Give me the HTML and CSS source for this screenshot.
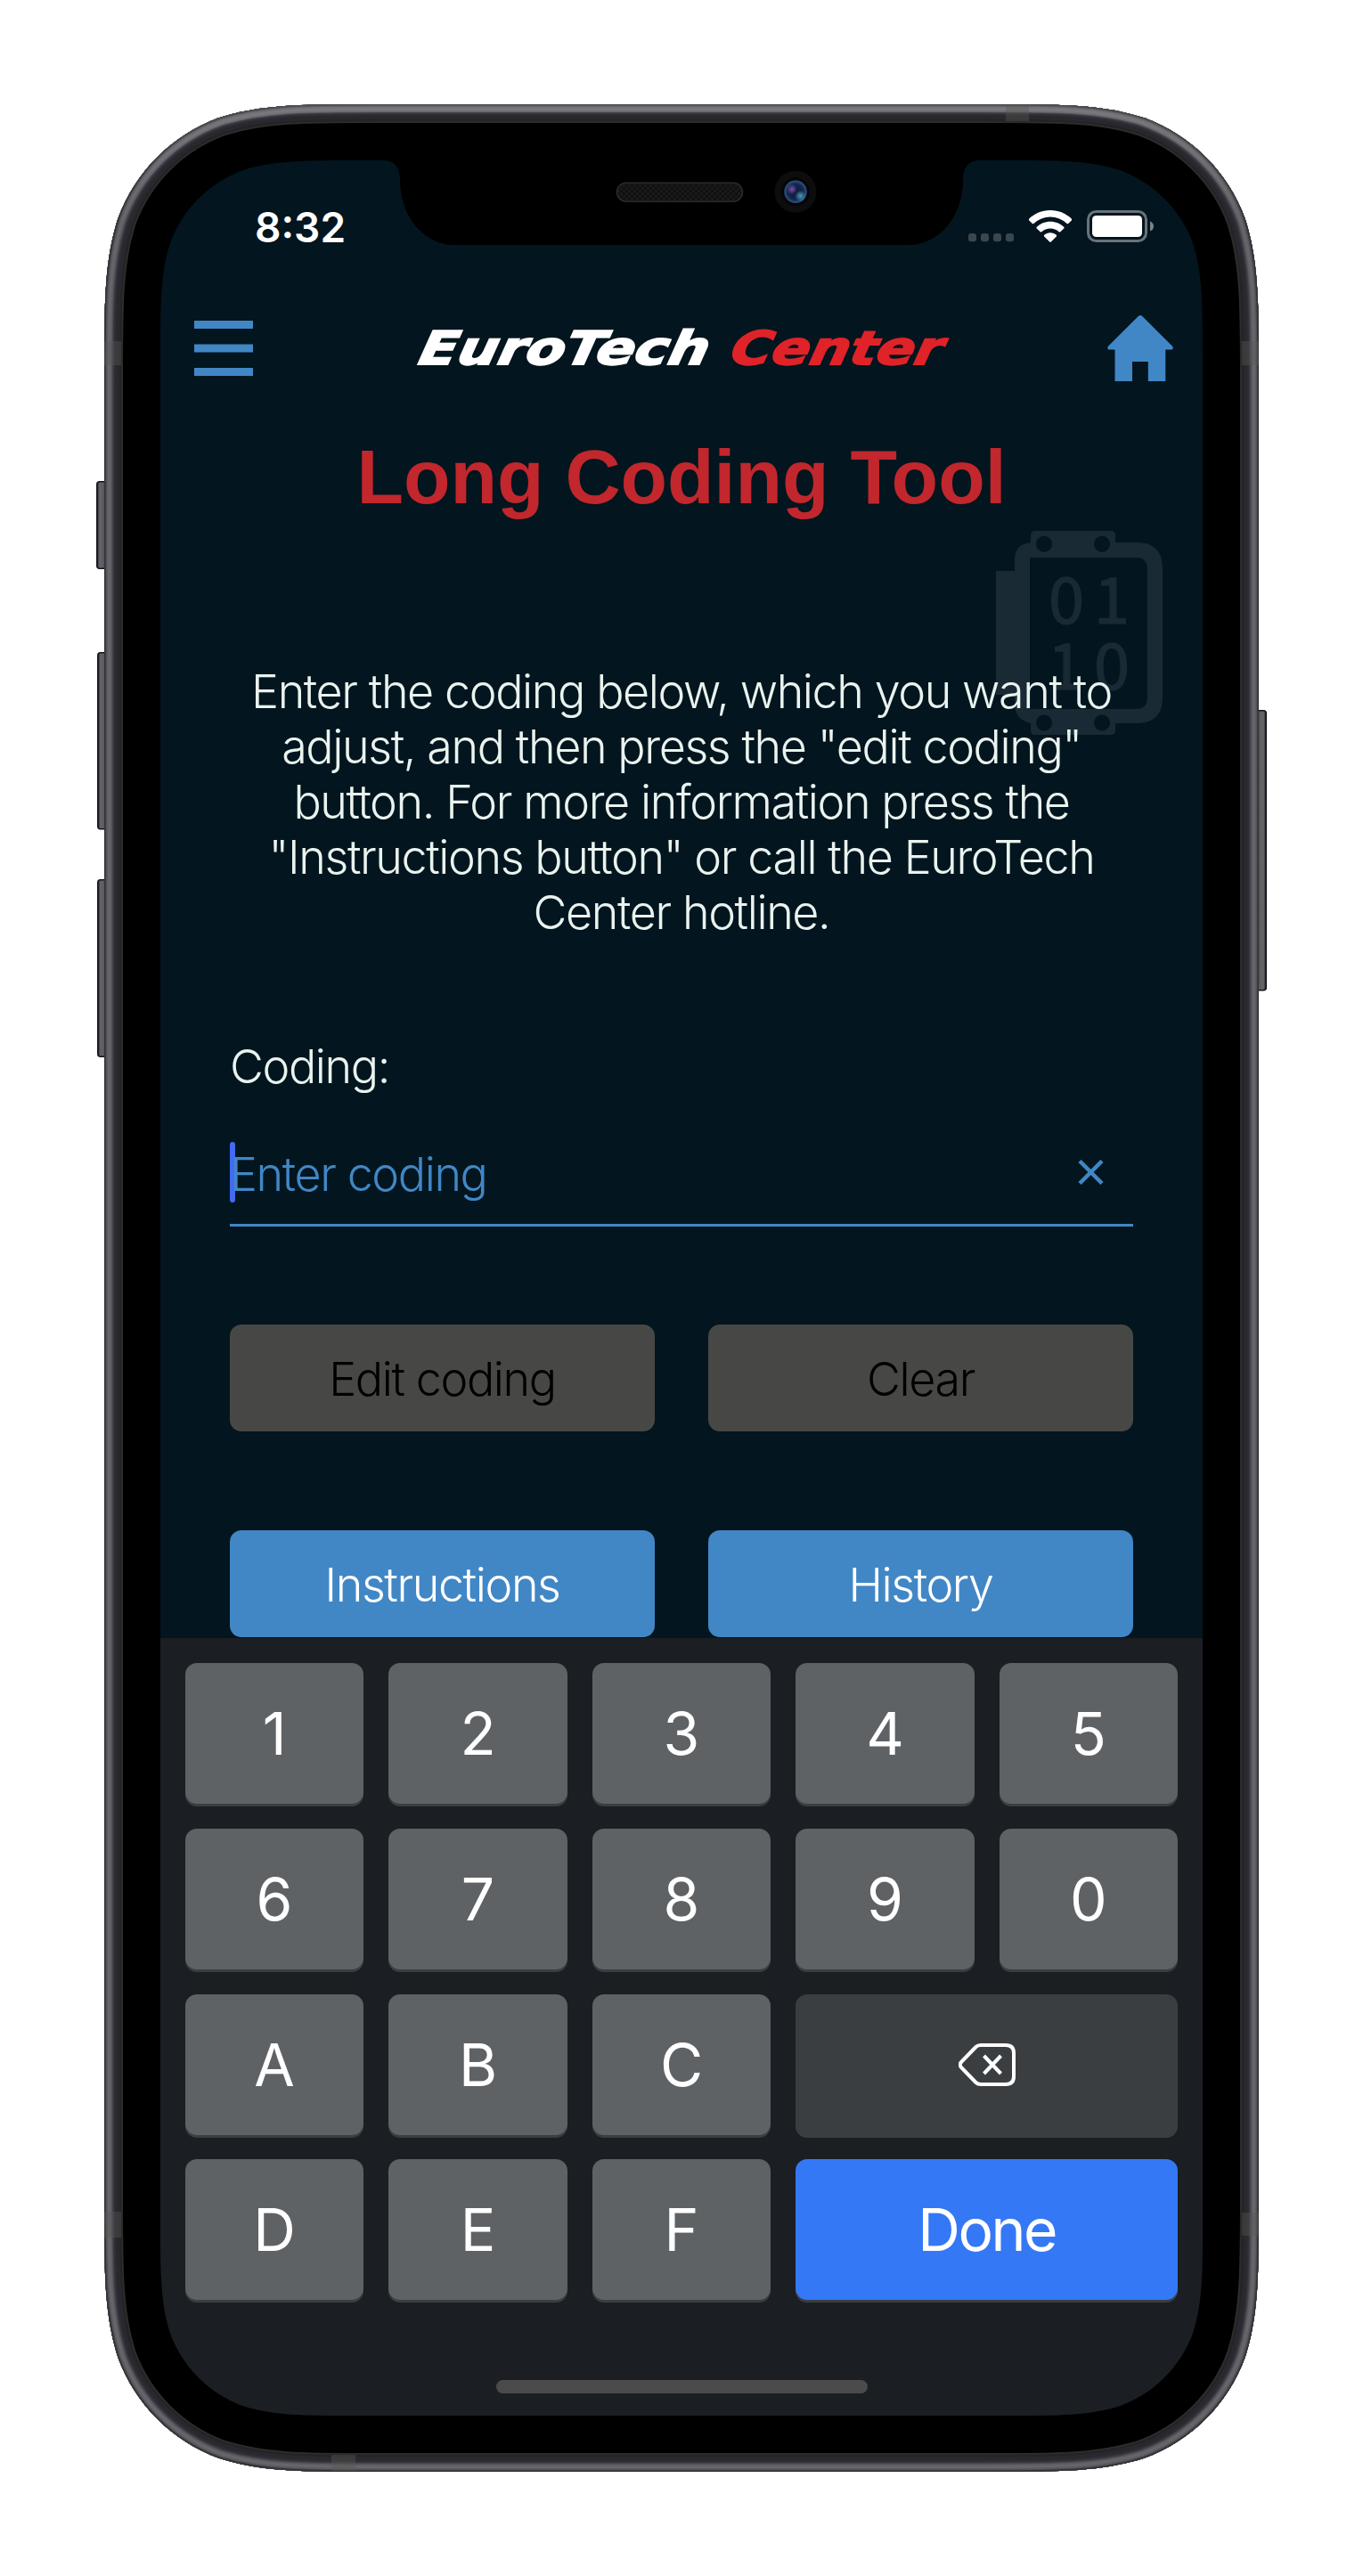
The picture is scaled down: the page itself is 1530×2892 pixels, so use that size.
FILE: index.html
```html
<!DOCTYPE html>
<html lang="en">
<head>
<meta charset="utf-8">
<title>Long Coding Tool</title>
<link rel="stylesheet" href="styles.css">
</head>
<body>
<div class="device">
  <svg class="bezel" width="1530" height="2892" viewBox="0 0 1530 2892" aria-hidden="true">
    <defs>
      <path id="body" d="M1101 117C1191 117 1236 117 1284.2 132.3C1337 151.5 1378.5 193 1397.7 245.8C1413 294 1413 339 1413 429V2463C1413 2553 1413 2598 1397.7 2646.2C1378.5 2699 1337 2740.5 1284.2 2759.7C1236 2775 1191 2775 1101 2775H429C339 2775 294 2775 245.8 2759.7C193 2740.5 151.5 2699 132.3 2646.2C117 2598 117 2553 117 2463V429C117 339 117 294 132.3 245.8C151.5 193 193 151.5 245.8 132.3C294 117 339 117 429 117Z"/>
      <clipPath id="bodyClip"><use href="#body"/></clipPath>
      <linearGradient id="keyL"><stop offset="0" stop-color="#1c1b24"/><stop offset=".25" stop-color="#66656b"/><stop offset=".6" stop-color="#5a595f"/><stop offset="1" stop-color="#3a393e"/></linearGradient>
      <linearGradient id="keyR"><stop offset="0" stop-color="#3e3e41"/><stop offset=".5" stop-color="#606064"/><stop offset=".75" stop-color="#67676a"/><stop offset="1" stop-color="#1c1b20"/></linearGradient>
      <linearGradient id="shine" x2="0" y2="1"><stop offset="0" stop-color="#fff" stop-opacity=".13"/><stop offset=".05" stop-color="#fff" stop-opacity="0"/></linearGradient>
      <radialGradient id="lens"><stop offset="0" stop-color="#0c1530"/><stop offset=".7" stop-color="#14264f"/><stop offset="1" stop-color="#2c5885"/></radialGradient>
      <radialGradient id="violet"><stop offset="0" stop-color="#7a4fa8"/><stop offset="1" stop-color="#7a4fa8" stop-opacity="0"/></radialGradient>
      <radialGradient id="cyan"><stop offset="0" stop-color="#4d9cb8"/><stop offset="1" stop-color="#4d9cb8" stop-opacity="0"/></radialGradient>
      <pattern id="mesh" width="6" height="6" patternUnits="userSpaceOnUse"><rect width="6" height="6" fill="#101010"/><path d="M0 0h3v3H0zM3 3h3v3H3z" fill="#1a1a1a"/></pattern>
    </defs>
    <g stroke="#15141a" stroke-width="1.5">
      <rect x="108.8" y="540.8" width="12" height="97.5" rx="3" fill="url(#keyL)"/>
      <rect x="109.8" y="732.8" width="12" height="198" rx="3" fill="url(#keyL)"/>
      <rect x="109.8" y="987.8" width="12" height="198.5" rx="3" fill="url(#keyL)"/>
      <rect x="1409" y="797.8" width="12.3" height="314" rx="3" fill="url(#keyR)"/>
    </g>
    <use href="#body"/>
    <g clip-path="url(#bodyClip)" fill="none">
      <use href="#body" stroke="#2c2c2a" stroke-width="42"/>
      <use href="#body" stroke="#232327" stroke-width="38"/>
      <use href="#body" stroke="#29282e" stroke-width="34"/>
      <use href="#body" stroke="#2e2d33" stroke-width="26"/>
      <use href="#body" stroke="#3c3b41" stroke-width="22"/>
      <use href="#body" stroke="#4d4c52" stroke-width="19"/>
      <use href="#body" stroke="#5c5b61" stroke-width="17"/>
      <use href="#body" stroke="#66656a" stroke-width="14"/>
      <use href="#body" stroke="#5c5b60" stroke-width="8"/>
      <use href="#body" stroke="#4c4b50" stroke-width="5"/>
      <use href="#body" stroke="#343337" stroke-width="3"/>
      <use href="#body" stroke="url(#shine)" stroke-width="18"/>
      <path d="M117 383h19v27h-19zM1394 383h19v27h-19zM117 2483h19v29h-19zM1394 2484h19v26h-19zM1129 118h26v18h-26zM372 2756h27v18h-27z" fill="#585855" fill-opacity=".4"/>
    </g>
    <rect x="692.5" y="205.2" width="141" height="21" rx="10.5" fill="url(#mesh)" stroke="#2b2b2b" stroke-width="1.5"/>
    <circle cx="893" cy="215.3" r="23.5" fill="#0d0d0d"/>
    <circle cx="893" cy="215.3" r="16" fill="#050507"/>
    <circle cx="893" cy="215.3" r="12.7" fill="url(#lens)"/>
    <circle cx="889" cy="212.5" r="6" fill="url(#violet)"/>
    <circle cx="898.5" cy="220" r="6.5" fill="url(#cyan)"/>
  </svg>

  <main class="screen">
    <div class="status">
      <span class="time">8:32</span>
      <div class="indicators">
        <svg width="51" height="36" fill="#3a474d"><rect y="26" width="9" height="9.3" rx="3"/><rect x="14" y="26" width="9" height="9.3" rx="3"/><rect x="28" y="26" width="9" height="9.3" rx="3"/><rect x="42" y="26" width="9" height="9.3" rx="3"/></svg>
        <svg width="48" height="36" fill="#fff"><path d="M24 0C33.300 0 41.800 3.600 48 9.800Q48.500 10.600 47.800 11.400L44.200 15Q43.400 15.700 42.600 15A27 27 0 0 0 5.400 15Q4.600 15.700 3.800 15L.2 11.400Q-.5 10.600 0 9.800C6.200 3.600 14.700 0 24 0Z"/><path d="M24 12.800C29.900 12.800 35.200 15.100 39.200 18.800Q40 19.700 39.200 20.500L35.300 24.200Q34.500 24.900 33.600 24.200A14.300 14.300 0 0 0 14.400 24.200Q13.500 24.900 12.700 24.200L8.800 20.500Q8 19.700 8.800 18.800C12.800 15.100 18.100 12.800 24 12.800Z"/><path d="M24 25.300C26.600 25.300 29 26.300 30.800 27.800Q31.500 28.600 30.800 29.400L24.800 35.500Q24 36.200 23.200 35.500L17.200 29.400Q16.500 28.600 17.200 27.800C19 26.300 21.400 25.300 24 25.300Z"/></svg>
        <svg width="75" height="36"><rect x="1.500" y="1.500" width="65" height="33" rx="9" fill="none" stroke="#68737a" stroke-width="3"/><rect x="6" y="6" width="56" height="24" rx="4.500" fill="#fff"/><path d="M71 12.500Q75 14 75 18T71 23.500Z" fill="#7b848a"/></svg>
      </div>
    </div>

    <header class="topbar">
      <svg width="66" height="74" fill="#4187c6"><path d="M0 6h66v9H0zM0 32.500h66v9H0zM0 59h66v9H0z"/></svg>
      <svg class="logo" width="598" height="74"><g transform="translate(0 54.500) skewX(-12)"><text x="3" y="0" textLength="325" lengthAdjust="spacingAndGlyphs" fill="#fff" stroke="#fff">EuroTech</text><text x="353" y="0" textLength="237" lengthAdjust="spacingAndGlyphs" fill="#e02329" stroke="#e02329">Center</text></g></svg>
      <svg width="74" height="74" fill="#4187c6"><path d="M34.500 1.200Q37 -1.200 39.500 1.200L73.300 35Q74.500 38.500 72 38.500H65.300V74H45.800V52H28V74H8.500V38.500H2Q-.5 38.500 .7 35Z"/></svg>
    </header>

    <h1>Long Coding Tool</h1>

    <section class="intro">
      <svg class="ecu" width="187" height="230" fill="#192a35" aria-hidden="true">
        <path fill-rule="evenodd" d="M39 5Q39 0 44 0H129Q134 0 134 5V13H158Q187 13 187 42V187Q187 216 158 216H134V224Q134 229 129 229H44Q39 229 39 224V216Q21 212 21 194V184H0V45H21V32Q21 15 39 13ZM38 30V200H157Q170 200 170 187V43Q170 30 157 30ZM54 5.700a9 9 0 1 0 .1 0ZM119 5.700a9 9 0 1 0 .1 0ZM54 206.500a9 9 0 1 0 .1 0ZM119 206.500a9 9 0 1 0 .1 0Z"/>
        <g class="bits"><text x="59" y="104">0</text><text x="110" y="104">1</text><text x="58" y="178">1</text><text x="110" y="178">0</text></g>
      </svg>
      <p>
        <span>Enter the coding below, which you want to</span>
        <span>adjust, and then press the "edit coding"</span>
        <span>button. For more information press the</span>
        <span>"Instructions button" or call the EuroTech</span>
        <span>Center hotline.</span>
      </p>
    </section>

    <form class="form">
      <label class="label">Coding:</label>
      <div class="field">
        <span class="caret"></span>
        <span class="placeholder">Enter coding</span>
        <svg class="clear" width="29" height="28" stroke="#4187c6" stroke-width="4.500"><path d="M2 1.500 27 26.500M27 1.500 2 26.500"/></svg>
      </div>
      <div class="actions">
        <span class="btn off">Edit coding</span>
        <span class="btn off">Clear</span>
        <span class="btn">Instructions</span>
        <span class="btn">History</span>
      </div>
    </form>

    <div class="keyboard">
      <div class="keys">
        <span class="key">1</span><span class="key">2</span><span class="key">3</span><span class="key">4</span><span class="key">5</span>
        <span class="key">6</span><span class="key">7</span><span class="key">8</span><span class="key">9</span><span class="key">0</span>
        <span class="key">A</span><span class="key">B</span><span class="key">C</span>
        <span class="key wide back"><svg width="64" height="48" fill="none" stroke="#fff" stroke-width="4"><path d="M25 2H53Q62 2 62 11V37Q62 46 53 46H25Q21.500 46 19.500 44L3.500 27.500Q0 24 3.500 20.500L19.500 4Q21.500 2 25 2Z"/><path d="M28.500 14 47.500 34M47.500 14 28.500 34"/></svg></span>
        <span class="key">D</span><span class="key">E</span><span class="key">F</span>
        <span class="key wide done">Done</span>
      </div>
      <div class="home-bar"></div>
    </div>
  </main>
</div>
</body>
</html>
```
FILE: styles.css
```css
* { box-sizing: border-box; }

body {
  margin: 0;
  background: #fff;
}

.device {
  position: relative;
  width: 1530px;
  height: 2892px;
  padding: 180px;
}

.bezel {
  position: absolute;
  left: 0;
  top: 0;
}

svg { display: block; flex: none; }

/* rounded display with the notch cut out of its top edge */
.screen {
  position: relative;
  display: flex;
  flex-direction: column;
  width: 1170px;
  height: 2532px;
  background: #03151e;
  color: #e9f3ef;
  font: 300 52px/62px Inter, "Liberation Sans", sans-serif;
  letter-spacing: -1.4px;
  clip-path: path("M250 0C263 0 269 8 269 22C269 62 295 95 330 95H840C875 95 901 62 901 22C901 8 907 0 920 0H945.3C1010 0 1042.3 0 1077.2 11C1115.2 24.9 1145.1 54.8 1159 92.8C1170 127.7 1170 160 1170 224.7V2307.3C1170 2372 1170 2404.3 1159 2439.2C1145.1 2477.2 1115.2 2507.1 1077.2 2521C1042.3 2532 1010 2532 945.3 2532H224.7C160 2532 127.7 2532 92.8 2521C54.8 2507.1 24.9 2477.2 11 2439.2C0 2404.3 0 2372 0 2307.3V224.7C0 160 0 127.7 11 92.8C24.9 54.8 54.8 24.9 92.8 11C127.7 0 160 0 224.7 0Z");
}

.status {
  display: flex;
  justify-content: space-between;
  align-items: flex-end;
  height: 92px;
  padding: 0 55px 0 106px;
}

.time {
  margin-bottom: -6px;
  color: #fff;
  font-weight: 600;
  font-size: 46px;
  line-height: 46px;
  letter-spacing: 0;
}

.indicators {
  display: flex;
  gap: 17px;
}

.topbar {
  display: flex;
  justify-content: space-between;
  height: 74px;
  margin-top: 82px;
  padding: 0 33px 0 38px;
}

.logo {
  overflow: visible;
  stroke-width: 1.8px;
  font: italic bold 52px "DejaVu Sans", sans-serif;
  letter-spacing: 0;
}

h1 {
  margin: 64px 0 0;
  color: #c1272d;
  font: bold 86px/86px "Liberation Sans", sans-serif;
  letter-spacing: 0;
  text-align: center;
  white-space: nowrap;
}

.intro {
  position: relative;
  margin-top: 168px;
}

/* watermark that sits behind the copy */
.ecu {
  position: absolute;
  left: 938px;
  top: -150px;
}

.bits {
  stroke: #192a35;
  stroke-width: 1.5px;
  font: 400 72px "Noto Sans CJK SC", sans-serif;
  letter-spacing: 0;
}

.intro p {
  position: relative;
  margin: 0;
  text-align: center;
}

.intro span {
  display: block;
  white-space: nowrap;
}

.form {
  display: flex;
  flex-direction: column;
  margin-top: 111px;
  padding: 0 78px;
}

.field {
  display: flex;
  align-items: flex-start;
  height: 95px;
  margin-top: 53px;
  border-bottom: 3px solid #4187c6;
  color: #4187c6;
}

.caret {
  width: 6px;
  height: 68px;
  margin-right: -6px;
  border-radius: 3px;
  background: #426bf2;
}

.placeholder { padding-top: 6px; }

.clear { margin: 20px 33px 0 auto; }

.actions {
  display: grid;
  grid-template-columns: 1fr 1fr;
  grid-auto-rows: 120px;
  gap: 111px 60px;
  margin-top: 110px;
}

.btn {
  display: flex;
  align-items: center;
  justify-content: center;
  padding-top: 4px;
  border-radius: 13px;
  background: #4187c6;
  color: #fff;
}

.btn.off {
  background: #474845;
  color: #000;
}

.keyboard {
  display: flex;
  flex-direction: column;
  align-items: center;
  height: 873px;
  margin-top: 1px;
  padding: 28px 28px 0;
  background: #1b1e23;
}

.keys {
  display: grid;
  grid-template-columns: repeat(5, 1fr);
  grid-auto-rows: 158px;
  gap: 27.8px 28.3px;
  width: 100%;
}

.key {
  display: flex;
  align-items: center;
  justify-content: center;
  border-radius: 13px;
  background: #5e6265;
  box-shadow: 0 3px 0 #3b3e41;
  color: #fff;
  font-weight: 400;
  font-size: 66px;
  letter-spacing: 0;
}

.wide { grid-column: span 2; }

.back { background: #3b3e41; }

.done {
  background: #3478f6;
  letter-spacing: -2.5px;
}

.home-bar {
  flex: none;
  width: 417px;
  height: 15px;
  margin-top: 90px;
  border-radius: 8px;
  background: #4b4b4b;
}
```
